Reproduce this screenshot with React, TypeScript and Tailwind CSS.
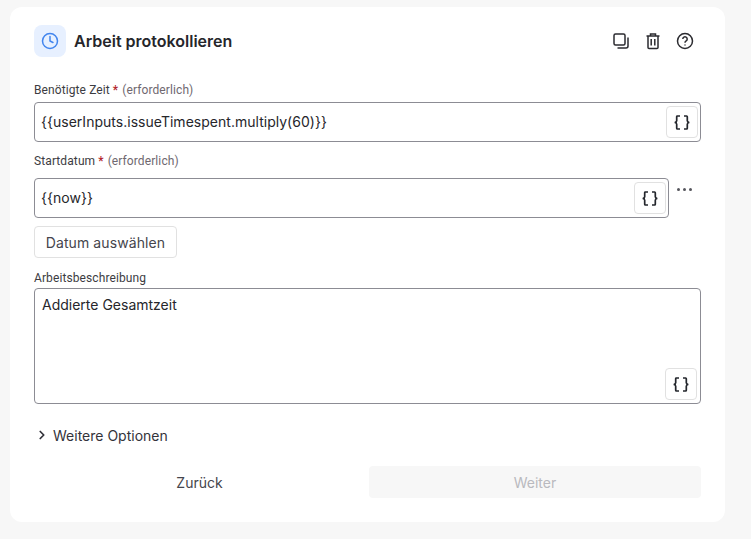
import React from "react";
import { ChevronRight, Clock } from "lucide-react";

const BracesButton = () => (
  <button className="flex h-[32px] w-[32px] shrink-0 items-center justify-center rounded-[4px] border border-[#e1e1e1] bg-white text-[#23262c]">
    <svg width="16" height="15" viewBox="0 0 16 15" fill="none" stroke="currentColor" strokeWidth="1.7">
      <path d="M6 1H3.4a.7.7 0 0 0-.7.7v4.1c0 .8-.7 1.5-2 1.7 1.3.2 2 .9 2 1.7v4.1c0 .4.3.7.7.7H6" />
      <path d="M10 1h2.6c.4 0 .7.3.7.7v4.1c0 .8.7 1.5 2 1.7-1.3.2-2 .9-2 1.7v4.1a.7.7 0 0 1-.7.7H10" />
    </svg>
  </button>
);

const FieldLabel = ({ text, required }: { text: string; required?: boolean }) => (
  <div className="flex h-[16px] items-center font-['Roboto',sans-serif] text-[12px] leading-[16px] font-normal tracking-[0.1px] text-[#3c3c42]">
    <span>{text}</span>
    {required && (
      <>
        <span className="ml-[3px] font-medium text-[#b3262d]">*</span>
        <span className="ml-[4px] text-[#6f6870]">(erforderlich)</span>
      </>
    )}
  </div>
);

const InputBox = ({ value }: { value: string }) => (
  <div className="flex h-[40px] w-full items-center justify-between rounded-[4px] border border-[#8c8c94] bg-white pr-[2px] pl-[6px]">
    <span className="-mt-[1px] text-[14px] tracking-[0.02px] text-[#26262b]">{value}</span>
    <BracesButton />
  </div>
);

export default function App() {
  return (
    <div className="h-[539px] w-[751px] overflow-hidden bg-[#f7f7f7] pt-[7px] pl-[10px] font-['Inter',sans-serif]">
      <div className="flex h-[515px] w-[715px] flex-col rounded-[12px] bg-white pt-[18px] pr-[24px] pl-[24px]">
        <div className="flex h-[32px] items-center justify-between">
          <div className="flex items-center gap-[8px]">
            <div className="flex h-[32px] w-[32px] items-center justify-center rounded-[8px] bg-[#e7f0ff]">
              <Clock size={18} className="text-[#4285ee]" strokeWidth={2} />
            </div>
            <h1 className="text-[16px] font-semibold text-[#26262b]">Arbeit protokollieren</h1>
          </div>
          <div className="flex items-center gap-[12px] pr-[6px] text-[#2b2b30]">
            <svg width="20" height="20" viewBox="0 0 20 20" fill="none" stroke="currentColor" strokeWidth="1.5">
              <rect x="3" y="3" width="11" height="11" rx="1.5" />
              <path d="M17 6.5V15a2 2 0 0 1-2 2H6.5" />
            </svg>
            <svg width="20" height="20" viewBox="0 0 20 20" fill="none" stroke="currentColor" strokeWidth="1.5">
              <path d="M3.5 5h13M7.5 5V3h5v2M5 5v11.5a1 1 0 0 0 1 1h8a1 1 0 0 0 1-1V5M8.2 8v6.5M11.8 8v6.5" />
            </svg>
            <svg width="20" height="20" viewBox="0 0 20 20" fill="none" stroke="currentColor" strokeWidth="1.5">
              <circle cx="10" cy="10" r="7.5" />
              <path d="M7.8 8a2.2 2.2 0 1 1 3.4 1.9c-.8.5-1.2 1-1.2 1.8" />
              <path d="M10 13.4v1" />
            </svg>
          </div>
        </div>

        <div className="mt-[25px]">
          <FieldLabel text="Benötigte Zeit" required />
          <div className="mt-[4px]">
            <InputBox value="{{userInputs.issueTimespent.multiply(60)}}" />
          </div>
        </div>

        <div className="mt-[11px]">
          <FieldLabel text="Startdatum" required />
          <div className="mt-[9px] flex">
            <div className="w-[635px]">
              <InputBox value="{{now}}" />
            </div>
            <div className="ml-[8px] flex h-[22px] items-center gap-[3px]">
              <span className="h-[3px] w-[3px] rounded-full bg-[#55555c]" />
              <span className="h-[3px] w-[3px] rounded-full bg-[#55555c]" />
              <span className="h-[3px] w-[3px] rounded-full bg-[#55555c]" />
            </div>
          </div>
        </div>

        <button className="mt-[8px] h-[32px] w-[143px] rounded-[4px] border border-[#e1e1e1] bg-white text-[14px] tracking-[0.1px] text-[#45454c]">
          Datum auswählen
        </button>

        <div className="mt-[12px]">
          <FieldLabel text="Arbeitsbeschreibung" />
          <div className="mt-[2px] flex h-[116px] flex-col justify-between rounded-[4px] border border-[#8c8c94] bg-white pt-[5px] pr-[3px] pb-[3px] pl-[7px]">
            <span className="text-[14px] text-[#26262b]">Addierte Gesamtzeit</span>
            <div className="flex justify-end">
              <BracesButton />
            </div>
          </div>
        </div>

        <div className="mt-[21px] flex h-[20px] items-center gap-[4px] pl-[1px] text-[14px] text-[#33333a]">
          <ChevronRight size={14} strokeWidth={3} />
          <span>Weitere Optionen</span>
        </div>

        <div className="mt-[21px] flex gap-[4px]">
          <button className="h-[32px] w-[331px] text-[14px] text-[#45454c]">Zurück</button>
          <button className="h-[32px] w-[332px] rounded-[4px] bg-[#f7f7f7] text-[14px] text-[#b9b9be]">Weiter</button>
        </div>
      </div>
    </div>
  );
}
